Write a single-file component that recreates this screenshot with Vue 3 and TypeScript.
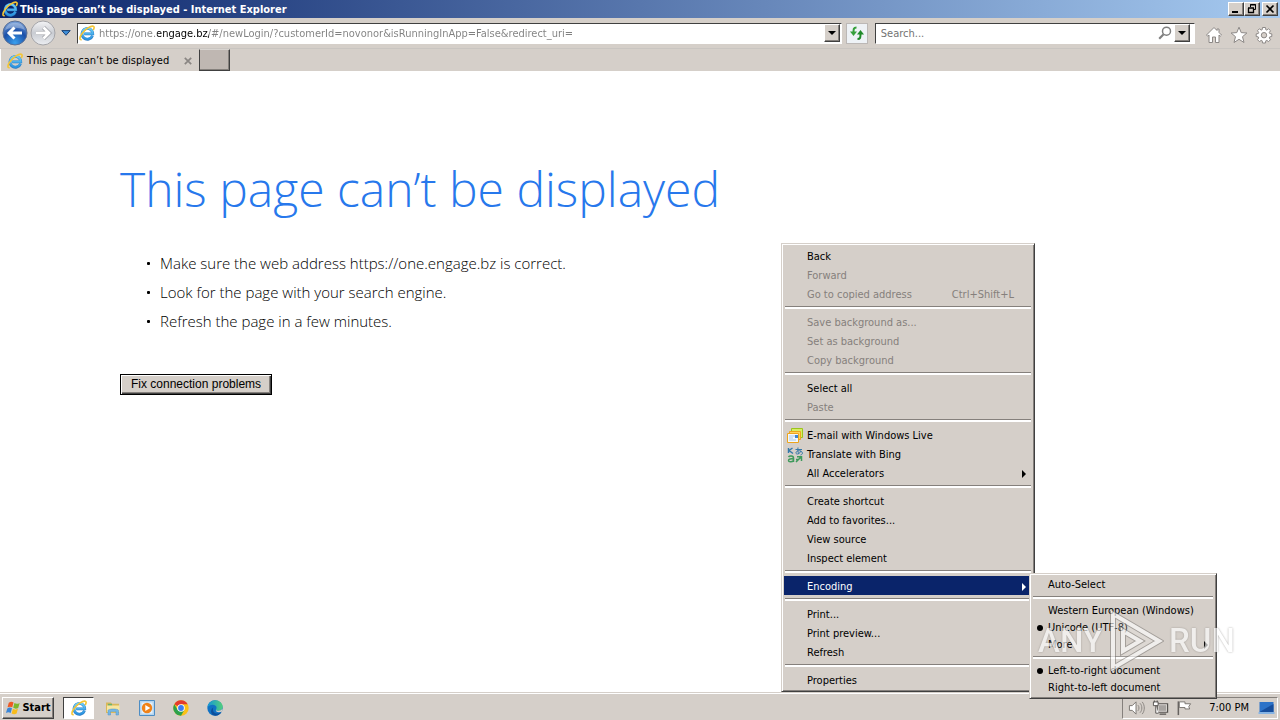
<script setup lang="ts">
import { ref } from 'vue'

interface Entry {
  label: string
  off?: boolean
  keys?: string
  more?: boolean
  on?: boolean
  dot?: boolean
  icon?: 'mail' | 'translate'
}

const address = ref('https://one.engage.bz/#/newLogin/?customerId=novonor&isRunningInApp=False&redirect_uri=')
const query = ref('')

const tips = [
  'Make sure the web address https://one.engage.bz is correct.',
  'Look for the page with your search engine.',
  'Refresh the page in a few minutes.',
]

const menu: Entry[][] = [
  [
    { label: 'Back' },
    { label: 'Forward', off: true },
    { label: 'Go to copied address', off: true, keys: 'Ctrl+Shift+L' },
  ],
  [
    { label: 'Save background as...', off: true },
    { label: 'Set as background', off: true },
    { label: 'Copy background', off: true },
  ],
  [{ label: 'Select all' }, { label: 'Paste', off: true }],
  [
    { label: 'E-mail with Windows Live', icon: 'mail' },
    { label: 'Translate with Bing', icon: 'translate' },
    { label: 'All Accelerators', more: true },
  ],
  [
    { label: 'Create shortcut' },
    { label: 'Add to favorites...' },
    { label: 'View source' },
    { label: 'Inspect element' },
  ],
  [{ label: 'Encoding', more: true, on: true }],
  [{ label: 'Print...' }, { label: 'Print preview...' }, { label: 'Refresh' }],
  [{ label: 'Properties' }],
]

const encodings: Entry[][] = [
  [{ label: 'Auto-Select' }],
  [
    { label: 'Western European (Windows)' },
    { label: 'Unicode (UTF-8)', dot: true },
    { label: 'More', more: true },
  ],
  [{ label: 'Left-to-right document', dot: true }, { label: 'Right-to-left document' }],
]
</script>

<template>
  <div class="desktop">
    <svg class="defs" aria-hidden="true">
      <defs>
        <linearGradient id="ieBlue" x1="0" y1="0" x2="0" y2="1">
          <stop offset="0" stop-color="#6fd0f8" />
          <stop offset="1" stop-color="#2b93e0" />
        </linearGradient>
        <radialGradient id="navBlue" cx=".5" cy=".9" r=".9">
          <stop offset="0" stop-color="#3aa0ee" />
          <stop offset=".55" stop-color="#1c50a8" />
          <stop offset="1" stop-color="#7fa6dc" />
        </radialGradient>
        <linearGradient id="navGrey" x1="0" y1="0" x2="0" y2="1">
          <stop offset="0" stop-color="#f4f4f6" />
          <stop offset=".5" stop-color="#c9ccd2" />
          <stop offset="1" stop-color="#eceef2" />
        </linearGradient>
        <linearGradient id="edgeSea" x1="0" y1="0" x2="1" y2="0">
          <stop offset="0" stop-color="#1496d8" />
          <stop offset="1" stop-color="#52cf7c" />
        </linearGradient>
        <symbol id="ie" viewBox="0 0 16 16">
          <path d="M13.500 10.700A5.400 5.400 0 1 1 13.800 8.900H5.200" fill="none" stroke="#2b7cc4" stroke-width="2.700" />
          <path d="M13.300 10.600A5.300 5.300 0 1 1 13.700 8.800H5.200" fill="none" stroke="url(#ieBlue)" stroke-width="2.100" />
          <path d="M2.700 14.600C.2 15.400.4 12 3.300 8.300C6.500 4.200 11.800.5 14.300 1.200C15.600 1.600 15.200 3.300 14.200 5" fill="none" stroke="#f4c534" stroke-width="1.600" />
        </symbol>
      </defs>
    </svg>

    <header class="titlebar">
      <svg class="i16"><use href="#ie" /></svg>
      <span class="title">This page can’t be displayed - Internet Explorer</span>
      <div class="winbtns">
        <button class="bevel" aria-label="Minimize">
          <svg viewBox="0 0 12 10"><path d="M2 7h6v2H2z" /></svg>
        </button>
        <button class="bevel" aria-label="Restore">
          <svg viewBox="0 0 12 10"><path d="M4.500 3V.5h5v5H8M4 1h6" fill="none" stroke="#000" /><path d="M2.500 4v4.500h5V4M2 4h6" fill="none" stroke="#000" stroke-width="1.300" /></svg>
        </button>
        <button class="bevel close" aria-label="Close">
          <svg viewBox="0 0 12 10"><path d="M2.500 1.500l7 7M9.500 1.500l-7 7" stroke="#000" stroke-width="1.700" /></svg>
        </button>
      </div>
    </header>

    <nav class="toolbar">
      <button class="nav" aria-label="Back">
        <svg viewBox="0 0 26 26"><circle cx="13" cy="13" r="12" fill="url(#navBlue)" stroke="#5b6f94" /><path d="M3 10a10.500 10.500 0 0 1 20 0c-6-3-14-3-20 0z" fill="#fff" opacity=".3" /><path d="M20 13H8M12.500 7.500L7 13l5.500 5.500" fill="none" stroke="#fff" stroke-width="3" /></svg>
      </button>
      <button class="nav" aria-label="Forward">
        <svg viewBox="0 0 26 26"><circle cx="13" cy="13" r="12" fill="url(#navGrey)" stroke="#a4a4a8" /><path d="M6 13h12M13.500 7.500L19 13l-5.500 5.500" fill="none" stroke="#9a9ca2" stroke-width="4.200" /><path d="M6 13h12M13.500 7.500L19 13l-5.500 5.500" fill="none" stroke="#fff" stroke-width="2.800" /></svg>
      </button>
      <button class="recent" aria-label="Recent pages">
        <svg viewBox="0 0 10 6"><path d="M.8.6h8.400L5 5.300z" fill="#3f8fd8" stroke="#173f73" /></svg>
      </button>
      <div class="field url">
        <svg class="i16"><use href="#ie" /></svg>
        <input v-model="address" class="address" type="text" aria-label="Address" spellcheck="false" />
        <button class="bevel drop" aria-label="Show address list">
          <svg viewBox="0 0 8 4"><path d="M0 0h8L4 4z" /></svg>
        </button>
      </div>
      <button class="refresh" aria-label="Refresh">
        <svg viewBox="0 0 16 16"><path d="M7.500 2.500C4.500 2.500 4.500 4 4.500 8" fill="none" stroke="#35a03a" stroke-width="2" /><path d="M1 6.500h7L4.500 11z" fill="#35a03a" /><path d="M8.500 14c3 0 3-1.500 3-5.500" fill="none" stroke="#1f8a28" stroke-width="2" /><path d="M8 9.500h7L11.500 5z" fill="#1f8a28" /></svg>
      </button>
      <div class="field search">
        <input v-model="query" type="text" placeholder="Search..." aria-label="Search" />
        <button class="lens" aria-label="Run search">
          <svg viewBox="0 0 14 14"><circle cx="8.500" cy="5.200" r="4" fill="none" stroke="#808080" stroke-width="1.500" /><path d="M5.600 8.200L1.200 12.700" stroke="#808080" stroke-width="2.200" /></svg>
        </button>
        <button class="bevel drop" aria-label="Search providers">
          <svg viewBox="0 0 8 4"><path d="M0 0h8L4 4z" /></svg>
        </button>
      </div>
      <div class="tools">
        <button aria-label="Home">
          <svg viewBox="0 0 18 18"><path d="M9 1.500L1.500 9l1.200 1.200L4 9v7.500h3.500V11h3v5.500H14V9l1.300 1.200L16.500 9 14 6.500V3h-2v1.500z" /></svg>
        </button>
        <button aria-label="Favorites">
          <svg viewBox="0 0 18 18"><path d="M9 1.200l2.200 5.400 5.700.4-4.400 3.700 1.500 5.800L9 13.300l-5 3.200 1.500-5.800L1.100 7l5.700-.4z" /></svg>
        </button>
        <button aria-label="Tools">
          <svg viewBox="0 0 18 18"><path d="M7.500 1.500h3l.3 2.200 1 .4 1.800-1.300 1.900 1.900-1.200 1.800.4 1 2.100.4v2.600l-2.100.4-.4 1 1.200 1.800-1.900 1.900-1.800-1.200-1 .4-.3 2.200h-3l-.3-2.200-1-.4-1.800 1.200-1.900-1.900 1.200-1.800-.4-1-2.100-.4V7.900l2.100-.4.4-1-1.200-1.800 1.900-1.900 1.800 1.300 1-.4z" /><circle cx="9" cy="9.200" r="2.700" class="hole" /></svg>
        </button>
      </div>
    </nav>

    <div class="tabs">
      <div class="tab">
        <svg class="i16"><use href="#ie" /></svg>
        <span>This page can’t be displayed</span>
        <button class="shut" aria-label="Close tab">
          <svg viewBox="0 0 8 8"><path d="M.8.8l6.400 6.400M7.200.8L.8 7.200" stroke="#8a8683" stroke-width="1.700" /></svg>
        </button>
      </div>
      <button class="newtab" aria-label="New tab"></button>
    </div>

    <main class="page">
      <h1>This page can’t be displayed</h1>
      <ul>
        <li v-for="tip in tips" :key="tip">{{ tip }}</li>
      </ul>
      <button class="fix">Fix connection problems</button>
    </main>

    <footer class="taskbar">
      <button class="bevel start">
        <svg viewBox="0 0 18 16">
          <path d="M4 2.500c2-1.500 3.500-1.300 5-.3L7.700 7.300C6 6.300 4.500 6.300 2.700 7.300z" fill="#ee5a24" />
          <path d="M10 2.800c2 1.200 3.500 1 5.500-.2L14 7.900c-2 1.100-3.500 1-5.300-.1z" fill="#7cb82c" />
          <path d="M2.400 8.400c1.900-1.200 3.400-1 5-.1L6 13.300c-1.600-1-3.200-1-5 0z" fill="#3a86d8" />
          <path d="M8.400 8.900c1.800 1.100 3.400 1.100 5.300 0l-1.400 5c-2 1.200-3.500 1-5.300 0z" fill="#f8bc1c" />
        </svg>
        <span>Start</span>
      </button>
      <div class="pinned">
        <button class="active" aria-label="Internet Explorer"><svg viewBox="0 0 16 16"><use href="#ie" /></svg></button>
        <button aria-label="File Explorer">
          <svg viewBox="0 0 16 16"><path d="M1 2.500h5l1 1.300h7V13H1z" fill="#d9b85a" /><path d="M3 3.800h4v2H3z" fill="#6cb26c" /><path d="M2 5.500h12.500V12H2z" fill="#f7e6a0" /><path d="M3 15v-4.500C3 8.500 13.500 8.500 13.500 10.500V15H11v-3.500H5.500V15z" fill="#74b6e4" stroke="#4c92c8" stroke-width=".5" /></svg>
        </button>
        <button aria-label="Media Player">
          <svg viewBox="0 0 16 16"><path d="M.5.500h15v15H.5z" fill="#b5d5ef" stroke="#4d8dc4" /><path d="M2.500 2.500h11v11h-11z" fill="#e4f1fb" /><circle cx="8" cy="8" r="5.200" fill="#f08218" /><path d="M6.300 5l5 3-5 3z" fill="#fff" /></svg>
        </button>
        <button aria-label="Chrome">
          <svg viewBox="0 0 16 16"><circle cx="8" cy="8" r="7.700" fill="#fbc116" /><path d="M8 8L1.330 4.150A7.700 7.700 0 0 1 14.670 4.150H8z" fill="#e33b2e" /><path d="M1.330 4.150A7.700 7.700 0 0 0 8 15.700L11.330 9.900 8 8 4.700 9.900z" fill="#2da14c" /><circle cx="8" cy="8" r="3.800" fill="#fff" /><circle cx="8" cy="8" r="2.900" fill="#3d7df0" /></svg>
        </button>
        <button aria-label="Edge">
          <svg viewBox="0 0 16 16"><circle cx="8" cy="8" r="7.700" fill="#1072c4" /><path d="M.4 7.600C1 3.200 4.200.3 8.200.3c4.300 0 7.500 3 7.500 6.500 0 2.500-2 4-4.300 4-1.800 0-2.600-.7-2.400-1.300.8-1 .8-2.700-.4-3.700C6.300 4 2.200 4.700.4 7.600z" fill="url(#edgeSea)" /><path d="M6.200 7.500c-1.300 3.700 1.700 7 5.700 5.800 1-.3 2-.8 2.600-1.300-1.500 2.700-4.300 4-7.300 3.600C3.500 14.500 3 9.500 6.200 7.500z" fill="#0c4f9c" /><path d="M9 9.500c-.2.700.7 1.300 2.400 1.300 1.700 0 3.200-.7 3.900-2v2.700c-3.300 1.400-7.300.9-6.300-2z" fill="#d5cfc9" /></svg>
        </button>
      </div>
      <div class="tray">
        <svg viewBox="0 0 18 16"><path d="M1.500 5.500h3l4-4v13l-4-4h-3z" fill="#fff" stroke="#77736f" /><path d="M10.500 5c1.500 1.500 1.500 4.500 0 6M12.700 3c2.600 2.500 2.600 7.500 0 10M15 1.500c3 3.500 3 9.500 0 13" fill="none" stroke="#888480" /></svg>
        <svg viewBox="0 0 18 16"><path d="M5.500 3.500h11v9h-11zM8 14.500h7" fill="#e4e0dc" stroke="#55524f" stroke-width="1.300" /><path d="M7 5h8v6H7z" fill="#a7a3a0" /><path d="M1.500 1.500h5v4h-5zM4 5.500v8h3M2.500 0v2M5.500 0v2" fill="#fff" stroke="#55524f" /></svg>
        <svg viewBox="0 0 18 16"><path d="M2.500 1v14.500" stroke="#66625f" stroke-width="1.600" /><path d="M3.500 1.500h6v2h6l-2 3 1 2.500h-5v-1.500h-6z" fill="#fff" stroke="#77736f" /></svg>
        <time>7:00 PM</time>
        <svg viewBox="0 0 16 16"><path d="M1 2h14v10H1z" fill="#2d73c8" /><path d="M1 12L15 4v8z" fill="#174e9c" /><path d="M0 12h16v2H0z" fill="#86b4e4" /></svg>
      </div>
    </footer>

    <ul class="menu context" role="menu" aria-label="Page">
      <template v-for="(group, g) in menu" :key="g">
        <li v-if="g" class="sep" role="separator"></li>
        <li v-for="item in group" :key="item.label" role="none">
          <button role="menuitem" :disabled="item.off" :class="{ on: item.on }">
            <span class="mark">
              <svg v-if="item.icon === 'mail'" viewBox="0 0 16 16"><path d="M4.500.5h11v9h-11z" fill="#d6ee62" stroke="#9cc41c" /><path d="M2.500 3.500h11v8h-11z" fill="#fdd35a" stroke="#eda41c" /><path d="M.5 5.500h11v9H.5z" fill="#f3f8fd" stroke="#eda41c" /><path d="M2 8h6M2 10h4M2 12h7" stroke="#a9c9e8" /><path d="M8 7h3v3H8z" fill="#3e86d0" /></svg>
              <svg v-else-if="item.icon === 'translate'" viewBox="0 0 16 16"><path d="M1.500 1v5M5.500 1L2 3.500 6 6.500" fill="none" stroke="#3578a8" stroke-width="1.400" /><path d="M8.500 2.500H15M11 .5c-.5 3 0 5 1 6.500M14 4C12 8 8.500 7.500 9 5.500s5-2.500 6-.5 0 2.500-1.500 3" fill="none" stroke="#3578a8" /><path d="M1.500 10c1-1.500 5-1.500 5 1v4M6.500 12C4 11.500 1.500 12 1.500 13.500s3.500 2 5 0" fill="none" stroke="#3f9a5c" stroke-width="1.500" /><path d="M9 15l5-5M10 9.800h4.500V14M9 12.500h3" fill="none" stroke="#3f9a5c" stroke-width="1.500" /></svg>
            </span>
            <span class="label">{{ item.label }}</span>
            <span v-if="item.keys" class="keys">{{ item.keys }}</span>
            <svg v-if="item.more" class="arrow" viewBox="0 0 4 8"><path d="M0 0l4 4-4 4z" /></svg>
          </button>
        </li>
      </template>
    </ul>

    <ul class="menu encoding" role="menu" aria-label="Encoding">
      <template v-for="(group, g) in encodings" :key="g">
        <li v-if="g" class="sep" role="separator"></li>
        <li v-for="item in group" :key="item.label" role="none">
          <button role="menuitem">
            <span class="mark">
              <svg v-if="item.dot" class="dot" viewBox="0 0 6 6"><circle cx="3" cy="3" r="3" /></svg>
            </span>
            <span class="label">{{ item.label }}</span>
            <svg v-if="item.more" class="arrow" viewBox="0 0 4 8"><path d="M0 0l4 4-4 4z" /></svg>
          </button>
        </li>
      </template>
    </ul>

    <div class="watermark">
      <span>ANY</span>
      <svg viewBox="0 0 56 60"><path d="M5 3l46 27L5 57zM15 20l17 10-17 10z" fill="#fff" fill-opacity=".3" stroke="#8a8682" stroke-width="6" fill-rule="evenodd" /><path d="M5 3l46 27L5 57zM15 20l17 10-17 10z" fill="none" stroke="#fff" stroke-width="4" /></svg>
      <span>RUN</span>
    </div>
  </div>
</template>

<style>
body {
  margin: 0;
}
</style>

<style scoped>
.desktop {
  --face: #d5cfc9;
  position: relative;
  display: flex;
  flex-direction: column;
  min-height: 100vh;
  overflow: hidden;
  background: #fff;
  color: #000;
  font: 11px/14px 'DejaVu Sans Condensed', 'DejaVu Sans', sans-serif;
}
.desktop * {
  box-sizing: border-box;
}
.defs {
  position: absolute;
  width: 0;
  height: 0;
}
button {
  display: flex;
  align-items: center;
  justify-content: center;
  padding: 0;
  border: 0;
  background: none;
  color: inherit;
  font: inherit;
}
svg {
  flex: none;
}
.i16 {
  width: 16px;
  height: 16px;
}
.bevel {
  border: 1px solid;
  border-color: #fff #404040 #404040 #fff;
  background: var(--face);
  box-shadow: inset -1px -1px #85807c;
}
.titlebar {
  display: flex;
  align-items: center;
  gap: 2px;
  height: 18px;
  padding: 0 2px;
  background: linear-gradient(90deg, #0a246a, #a6caf0);
  color: #fff;
  font-weight: bold;
}
.title {
  flex: 1;
  padding-top: 1px;
}
.winbtns {
  display: flex;
}
.winbtns button {
  width: 16px;
  height: 14px;
}
.winbtns .close {
  margin-left: 2px;
}
.winbtns svg {
  width: 12px;
  height: 10px;
}
.toolbar {
  display: flex;
  align-items: center;
  height: 30px;
  padding: 0 7px 0 2px;
  background: var(--face);
}
.nav,
.nav svg {
  width: 26px;
  height: 26px;
}
.nav + .nav {
  margin-left: 2px;
}
.recent {
  width: 20px;
  height: 20px;
  margin-right: 1px;
}
.recent svg {
  width: 10px;
  height: 6px;
}
.field {
  display: flex;
  align-items: center;
  height: 21px;
  padding: 0 1px;
  border: 1px solid;
  border-color: #404040 #fff #fff #404040;
  background: #fff;
}
.url {
  flex: 770;
  min-width: 0;
  padding-left: 1px;
}
.search {
  flex: 317;
  min-width: 0;
  padding-right: 4px;
}
.field input {
  flex: 1;
  min-width: 0;
  padding: 2px 4px 0;
  border: 0;
  outline: 0;
  background: none;
  color: #737373;
  font: inherit;
}
.field input::placeholder {
  color: #737373;
  opacity: 1;
}
.field .address {
  background: linear-gradient(90deg, #808080 62px, #000 62px 114px, #808080 114px);
  background-clip: text;
  color: transparent;
  caret-color: #000;
}
.drop {
  width: 16px;
  height: 18px;
}
.drop svg {
  width: 8px;
  height: 4px;
}
.refresh {
  width: 22px;
  height: 21px;
  margin: 0 7px 0 4px;
  border: 1px solid #bcb8b6;
  background: #eef2f6;
}
.refresh svg {
  width: 16px;
  height: 16px;
}
.lens,
.lens svg {
  width: 14px;
  height: 14px;
}
.lens {
  margin-right: 2px;
}
.tools {
  display: flex;
  gap: 7px;
  margin-left: 10px;
  padding-top: 4px;
}
.tools svg {
  width: 18px;
  height: 18px;
  fill: #fff;
  stroke: #8c8886;
}
.tools .hole {
  fill: var(--face);
}
.tabs {
  display: flex;
  height: 23px;
  border-top: 1px solid #c9c5c1;
  background: var(--face);
}
.tab {
  display: flex;
  align-items: center;
  gap: 4px;
  width: 199px;
  padding: 1px 6px 0;
  border-left: 1px solid #fff;
}
.shut {
  width: 10px;
  height: 14px;
  margin-left: auto;
}
.shut svg {
  width: 8px;
  height: 8px;
}
.newtab {
  width: 31px;
  height: 22px;
  border: 1px solid #404040;
  border-top-color: #d8d4d0;
  background: #bfb7b2;
  box-shadow: inset -1px -1px #85807c;
}
.page {
  flex: 1;
  padding: 88px 120px 0;
  font-family: 'Open Sans', 'Noto Sans', sans-serif;
  font-weight: 300;
}
h1 {
  margin: 0;
  color: #2778ec;
  font-size: 48px;
  font-weight: 300;
  line-height: 60px;
}
.page ul {
  margin: 30px 0 0;
  padding-left: 27px;
  font-size: 15px;
  line-height: 29px;
  list-style: none;
}
.page li {
  display: flex;
  align-items: center;
  gap: 10px;
}
.page li::before {
  width: 3px;
  height: 3px;
  border-radius: 1px;
  background: #000;
  content: '';
}
.fix {
  margin-top: 38px;
  padding: 1px 10px 2px;
  border: 1px solid #000;
  background: var(--face);
  box-shadow: inset 1px 1px #fff, inset -1px -1px #404040, inset -2px -2px #85807c;
  font: 12px/16px 'Liberation Sans', Arial, sans-serif;
}
.taskbar {
  display: flex;
  align-items: center;
  height: 28px;
  padding: 2px 2px 0;
  border-top: 1px solid var(--face);
  background: var(--face);
  box-shadow: inset 0 1px #fff;
}
.start {
  width: 52px;
  height: 22px;
  font-weight: bold;
}
.start svg {
  width: 17px;
  height: 16px;
}
.pinned {
  display: flex;
  gap: 4px;
  margin-left: 9px;
}
.pinned button {
  width: 30px;
  height: 22px;
}
.pinned svg {
  width: 16px;
  height: 16px;
}
.pinned .active {
  width: 31px;
  border: 1px solid;
  border-color: #404040 #fff #fff #404040;
  background: #fff;
}
.tray {
  display: flex;
  align-items: center;
  gap: 7px;
  height: 22px;
  margin-left: auto;
  padding: 0 2px 0 5px;
  border: 1px solid;
  border-color: #85807c #fff #fff #85807c;
}
.tray svg {
  width: 17px;
  height: 16px;
}
.tray time {
  margin: 0 2px 0 9px;
}
.menu {
  position: absolute;
  margin: 0;
  padding: 2px;
  border: 1px solid;
  border-color: var(--face) #404040 #404040 var(--face);
  background: var(--face);
  box-shadow: inset 1px 1px #fff, inset -1px -1px #85807c;
  list-style: none;
}
.context {
  top: 243px;
  left: 781px;
  width: 254px;
}
.encoding {
  top: 573px;
  left: 1029px;
  width: 188px;
}
.menu button {
  width: 100%;
  height: 19px;
  padding: 2px 6px 0 0;
  text-align: left;
}
.encoding button {
  height: 17px;
  padding-top: 0;
}
.menu button:disabled {
  color: #85807c;
}
.menu .on {
  background: #0a246a;
  color: #fff;
}
.mark {
  display: flex;
  flex: none;
  align-items: center;
  width: 23px;
  height: 16px;
  padding-left: 3px;
}
.encoding .mark {
  width: 16px;
  padding-left: 5px;
}
.mark svg {
  width: 16px;
  height: 16px;
}
.mark .dot {
  width: 6px;
  height: 6px;
}
.label {
  flex: 1;
}
.keys {
  margin-right: 12px;
}
.arrow {
  width: 4px;
  height: 8px;
  fill: currentColor;
}
.sep {
  height: 9px;
  padding: 3px 1px 0;
}
.sep::before {
  display: block;
  height: 2px;
  border-top: 1px solid #85807c;
  background: #fff;
  content: '';
}
.watermark {
  position: absolute;
  top: 611px;
  left: 1038px;
  display: flex;
  align-items: center;
  gap: 5px;
  opacity: 0.65;
  color: #fff;
  font: 500 33px/60px Roboto, 'Open Sans', sans-serif;
  text-shadow: 0 0 2px #7a7672;
  pointer-events: none;
}
.watermark svg {
  width: 56px;
  height: 60px;
}
</style>
